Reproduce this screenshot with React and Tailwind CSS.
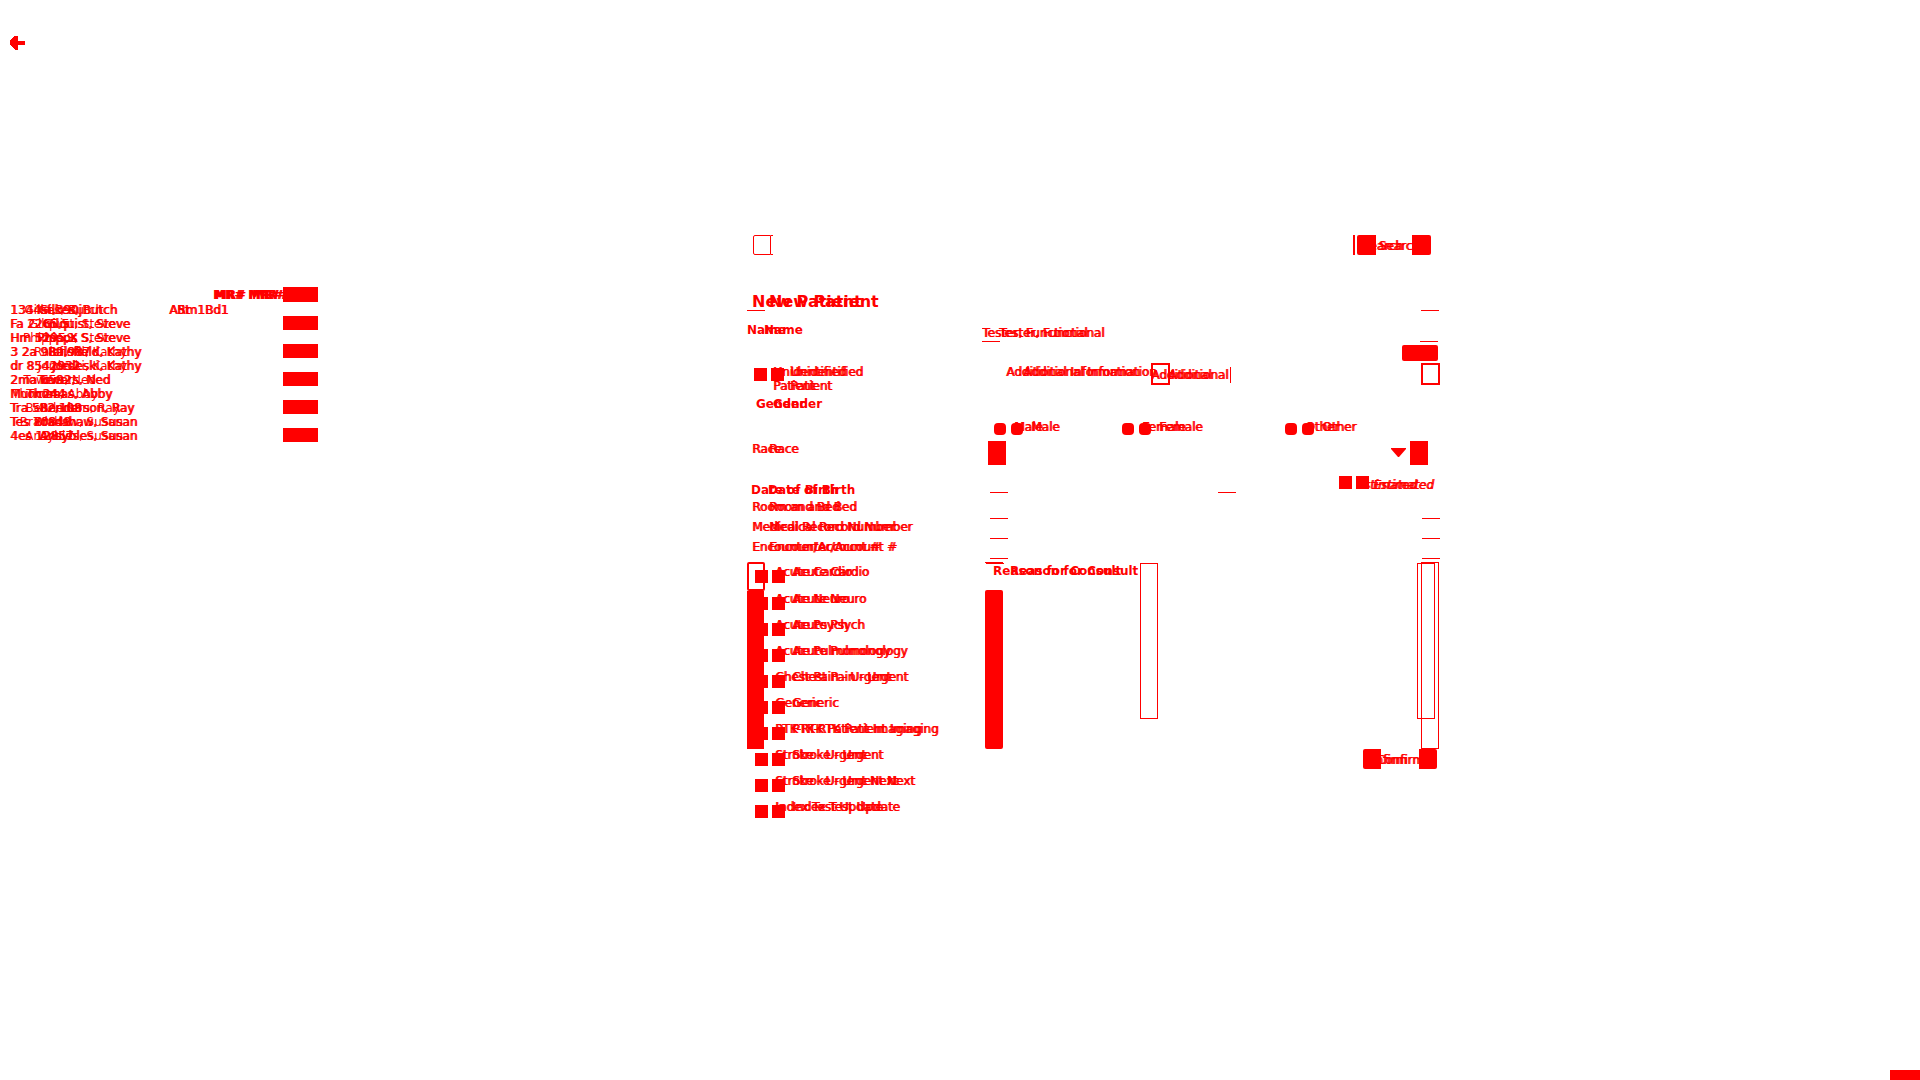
import React from 'react';

const ghost = '[text-shadow:1px_0_0_#ff0000,17px_0_0_#ff0000,18px_0_0_#ff0000]';
const ghostBold = 'font-bold [text-shadow:17px_0_0_#ff0000]';
const box =
  'm-0 block size-[13px] shrink-0 appearance-none bg-[#ff0000] shadow-[17px_0_0_#ff0000]';

const residents = [
  ['Gilkes, Butch', '1344st,390j', 'Rm1Bd1'],
  ['Gilquist, Steve', 'Fa 2265,5', ''],
  ['Phipps S, Steve', 'Hm 5295,X', ''],
  ['Ralsfield, Kathy', '3 2a 989,987', ''],
  ['Jordeski, Kathy', 'dr 8542932', ''],
  ['Towers, Ned', '2ma 6592,', ''],
  ['Thomas, Abby', 'Munc244', ''],
  ['Benderson, Ray', 'Tra 582,108', ''],
  ['Bradshaw, Susan', 'Tes 70848', ''],
  ['Ansybles, Susan', '4es 12857', ''],
];

const nameWidths = [117, 130, 130, 141, 141, 110, 112, 134, 137, 137];

const protocols = [
  'Acute Cardio',
  'Acute Neuro',
  'Acute Psych',
  'Acute Pulmonology',
  'Chest Pain - Urgent',
  'Generic',
  'PTK-RTK Patient Imaging',
  'Stroke - Urgent',
  'Stroke - Urgent Next',
  'Index Test Update',
];

function Mark({ className = '' }) {
  return <i className={`block h-px w-[18px] shrink-0 bg-[#ff0000] ${className}`} />;
}

function Check({ id, label, className = '' }) {
  return (
    <label htmlFor={id} className={`flex ${className}`}>
      <input id={id} type="checkbox" className={`${box} mt-[5px]`} />
      <span className={`ml-[7px] ${ghost}`}>{label}</span>
    </label>
  );
}

function Radio({ label, className }) {
  return (
    <label className={`flex shrink-0 ${className}`}>
      <input
        type="radio"
        name="gender"
        className="m-0 mt-[3px] block size-3 shrink-0 appearance-none rounded-[4px] bg-[#ff0000] shadow-[17px_0_0_#ff0000]"
      />
      <span className={`ml-2 ${ghost}`}>{label}</span>
    </label>
  );
}

function LineField({ id, label }) {
  return (
    <div className="flex h-5 items-start">
      <label htmlFor={id} className={`w-[238px] shrink-0 pl-[5px] pt-px ${ghost}`}>
        {label}
      </label>
      <div className="flex h-5 flex-1 items-end justify-between pl-[5px]">
        <Mark />
        <input id={id} className="h-4 min-w-0 flex-1 bg-transparent outline-none" />
        <Mark />
      </div>
    </div>
  );
}

function Residents() {
  return (
    <aside className="w-[747px] shrink-0 pt-9">
      <button aria-label="Back" className="ml-[10px] block">
        <svg width="15" height="14" viewBox="0 0 15 14" fill="#ff0000" shapeRendering="crispEdges">
          <path d="M4 0H8V5H15V9H8V14H5L0 9V4Z" />
        </svg>
      </button>
      <table className="mt-[237px] table-fixed border-collapse text-left">
        <colgroup>
          <col className="w-[169px]" />
          <col className="w-11" />
          <col className="w-[35px]" />
          <col className="w-[35px]" />
          <col className="w-[35px]" />
        </colgroup>
        <thead>
          <tr className="h-[15px] font-bold">
            <td />
            <td />
            <th className="p-0 pt-px whitespace-nowrap [text-shadow:1px_0_0_#ff0000,2px_0_0_#ff0000]">MR#</th>
            <th className="p-0 pt-px whitespace-nowrap [text-shadow:1px_0_0_#ff0000,4px_0_0_#ff0000,8px_0_0_#ff0000]">MR#</th>
            <th className="bg-[#ff0000] p-0" />
          </tr>
        </thead>
        <tbody>
          {residents.map(([name, number, room], i) => (
            <tr key={name} className="h-[14px]">
              <td className="p-0">
                <div className="relative h-[14px] pl-[10px] leading-4 whitespace-nowrap [text-shadow:1px_0_0_#ff0000]">
                  <span>{number}</span>
                  <span
                    className="absolute top-0 left-0 text-right [text-shadow:1px_0_0_#ff0000,-14px_0_0_#ff0000]"
                    style={{ width: nameWidths[i] }}
                  >
                    {name}
                  </span>
                </div>
              </td>
              <td className="p-0">
                <div className="relative h-[14px] leading-4 whitespace-nowrap [text-shadow:1px_0_0_#ff0000]">
                  {room && <span>A5t</span>}
                  <span className="absolute top-0 left-2">{room}</span>
                </div>
              </td>
              <td className="p-0" />
              <td className="p-0" />
              <td className={i % 2 ? 'bg-[#ff0000] p-0' : 'p-0'} />
            </tr>
          ))}
        </tbody>
      </table>
    </aside>
  );
}

export default function App() {
  return (
    <div className="flex min-h-screen flex-col bg-white font-['DejaVu_Sans',sans-serif] text-xs leading-[14px] text-[#ff0000]">
      <div className="flex flex-1">
        <Residents />
        <form className="max-w-[693px] flex-1 pt-[235px]" onSubmit={(e) => e.preventDefault()}>
          <div className="flex h-5 justify-between pr-[9px] pl-[6px]">
            <button type="button" aria-label="Menu" className="flex h-5 w-5">
              <span className="h-5 w-[18px] rounded-l-xs border border-[#ff0000]" />
              <span className="h-5 w-[2px] border-y border-[#ff0000]" />
            </button>
            <span className="flex">
              <i className="mr-[2px] w-[2px] bg-[#ff0000]" />
              <button type="button" className="h-5 w-[74px] overflow-hidden rounded-xs border-x-[19px] border-[#ff0000] whitespace-nowrap">
                <span className={`-ml-[24px] block pt-px ${ghost}`}>Search</span>
              </button>
            </span>
          </div>

          <h1 className={`mt-[38px] h-[17px] pl-[5px] text-base leading-[18px] ${ghostBold}`}>New Patient</h1>
          <div className="flex justify-between pr-px">
            <Mark />
            <Mark />
          </div>
          <div className="flex h-[31px]">
            <label htmlFor="name" className={`w-[235px] pt-3 ${ghostBold}`}>Name</label>
            <div className="flex flex-1 flex-col justify-end pr-[2px]">
              <input id="name" defaultValue="Tester, Functional" className={`mb-px h-[14px] w-full bg-transparent outline-none ${ghost}`} />
              <div className="flex justify-between">
                <Mark />
                <Mark />
              </div>
            </div>
          </div>
          <div className="flex h-[21px] justify-end pt-[3px] pr-[2px]">
            <button type="button" aria-label="Add name" className="h-4 w-9 rounded-xs bg-[#ff0000]" />
          </div>

          <div className="flex h-[34px]">
            <label className="flex w-[259px] pt-[2px] pl-[7px]">
              <input type="checkbox" className={`${box} mt-[3px]`} />
              <span className={`ml-[6px] w-20 ${ghost}`}>Unidentified Patient</span>
            </label>
            <label htmlFor="info" className={`w-[145px] pt-[2px] whitespace-nowrap ${ghost}`}>Additional Information</label>
            <div className="relative flex h-[22px] flex-1 justify-between">
              <i className="w-[19px] border-2 border-[#ff0000]" />
              <input id="info" defaultValue="Additional" className={`absolute top-1 left-0 h-4 w-20 border-r border-[#ff0000] bg-transparent outline-none ${ghost}`} />
              <i className="w-[19px] border-2 border-[#ff0000]" />
            </div>
          </div>

          <fieldset>
            <legend className={`h-[23px] pl-[9px] ${ghostBold}`}>Gender</legend>
            <div className="flex h-[21px] pl-[247px]">
              <Radio label="Male" className="w-32" />
              <Radio label="Female" className="w-[163px]" />
              <Radio label="Other" className="" />
            </div>
          </fieldset>

          <div className="flex h-[35px]">
            <label htmlFor="race" className={`w-[241px] pt-px pl-[5px] ${ghost}`}>Race</label>
            <div className="relative mr-3 h-6 flex-1">
              <select id="race" className="h-6 w-full appearance-none border-x-[18px] border-[#ff0000] bg-transparent" />
              <svg className="absolute top-[7px] right-[22px]" width="15" height="9" viewBox="0 0 15 9" fill="#ff0000">
                <path d="M0 0H15V1L8 9H7L0 1Z" />
              </svg>
            </div>
          </div>

          <div className="flex h-[23px]">
            <label htmlFor="birth" className={`w-[243px] pt-[7px] pl-1 ${ghostBold}`}>Date of Birth</label>
            <div className="flex h-[17px] w-[246px] items-end justify-between">
              <Mark />
              <input id="birth" className="h-3 min-w-0 flex-1 bg-transparent outline-none" />
              <Mark />
            </div>
            <label className="ml-auto flex w-[101px]">
              <input type="checkbox" className={box} />
              <span className={`ml-1 pt-[2px] italic ${ghost}`}>Estimated</span>
            </label>
          </div>
          <LineField id="room" label="Room and Bed" />
          <LineField id="record" label="Medical Record Number" />
          <LineField id="account" label="Encounter/Account #" />

          <div className="mt-[3px] flex items-start">
            <div className="relative w-[238px]">
              <div className="absolute top-0 left-0">
                <i className="block h-[29px] w-[18px] rounded-xs border-2 border-[#ff0000]" />
                <i className="block h-[158px] w-[17px] bg-[#ff0000]" />
              </div>
              <div className="relative pt-[3px] pl-2">
                {protocols.map((p, i) => (
                  <Check
                    key={p}
                    id={`p${i}`}
                    label={p}
                    className={i === 0 ? 'h-[27px] whitespace-nowrap' : 'h-[26px] whitespace-nowrap'}
                  />
                ))}
              </div>
            </div>
            <div className="w-[155px]">
              <Mark />
              <Mark className="ml-px" />
              <h2 className={`h-[26px] pl-2 whitespace-nowrap ${ghostBold}`}>Reason for Consult</h2>
              <i className="block h-[159px] w-[18px] rounded-xs bg-[#ff0000]" />
            </div>
            <i className="mt-px h-[156px] w-[18px] border border-[#ff0000]" />
            <div className="ml-auto flex flex-col items-end pr-px">
              <div className="flex">
                <i className="mt-px -mr-[14px] h-[156px] w-[18px] border border-[#ff0000]" />
                <i className="h-[187px] w-[18px] border border-[#ff0000]" />
              </div>
              <button type="submit" className="mr-[2px] h-5 w-[74px] overflow-hidden rounded-xs border-x-[18px] border-[#ff0000] whitespace-nowrap">
                <span className={`-ml-[34px] block pt-px ${ghost}`}>Confirm</span>
              </button>
            </div>
          </div>
        </form>
      </div>
      <footer className="-mt-[10px] ml-auto h-[10px] w-[30px] bg-[#ff0000]" />
    </div>
  );
}
